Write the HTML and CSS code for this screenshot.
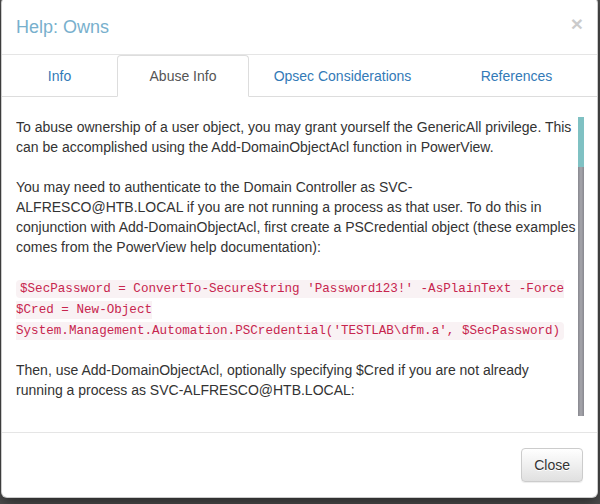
FILE: index.html
```html
<!DOCTYPE html>
<html lang="en">
<head>
<meta charset="utf-8">
<title>Help: Owns</title>
<link rel="stylesheet" href="styles.css">
</head>
<body>
<div class="modal">
  <div class="modal-header">
    <h4 class="modal-title">Help: Owns</h4>
    <button class="close" type="button">&times;</button>
  </div>
  <ul class="tabs">
    <li><a href="#">Info</a></li>
    <li class="active"><a href="#">Abuse Info</a></li>
    <li><a href="#">Opsec Considerations</a></li>
    <li><a href="#">References</a></li>
  </ul>
  <div class="tab-content">
    <div class="scroll">
      <div class="pane">
        <p class="para">To abuse ownership of a user object, you may grant yourself the GenericAll privilege. This can be accomplished using the Add-DomainObjectAcl function in PowerView.</p>
        <p class="para">You may need to authenticate to the Domain Controller as SVC-ALFRESCO@HTB.LOCAL if you are not running a process as that user. To do this in conjunction with Add-DomainObjectAcl, first create a PSCredential object (these examples comes from the PowerView help documentation):</p>
        <p class="para"><code>$SecPassword = ConvertTo-SecureString 'Password123!' -AsPlainText -Force<br>$Cred = New-Object System.Management.Automation.PSCredential('TESTLAB\dfm.a', $SecPassword)</code></p>
        <p class="para">Then, use Add-DomainObjectAcl, optionally specifying $Cred if you are not already running a process as SVC-ALFRESCO@HTB.LOCAL:</p>
      </div>
      <div class="scrollbar"><div class="thumb"></div></div>
    </div>
  </div>
  <div class="modal-footer">
    <button class="btn" type="button">Close</button>
  </div>
</div>
</body>
</html>
```

FILE: styles.css
```css
html, body {
  margin: 0;
  padding: 0;
}

body {
  background: #505050;
  height: 504px;
  overflow: hidden;
  font-family: "Liberation Sans", Arial, sans-serif;
  font-size: 14px;
  line-height: 1.42857143;
  color: #333;
}

.modal {
  margin: -3px 2px 0 1px;
  background: #fff;
  border: 1px solid rgba(0, 0, 0, 0.2);
  border-radius: 6px;
  box-shadow: 0 5px 15px rgba(0, 0, 0, 0.5);
}

.modal-header {
  display: flex;
  justify-content: space-between;
  align-items: flex-start;
  padding: 17px 14px 13px;
  border-bottom: 1px solid #e5e5e5;
}

.modal-title {
  margin: 0;
  font-size: 18px;
  font-weight: normal;
  line-height: 1.42857143;
  color: #78b0cd;
}

.close {
  margin-top: -2px;
  padding: 0;
  border: 0;
  background: none;
  font-family: "Liberation Sans", Arial, sans-serif;
  font-size: 21px;
  font-weight: bold;
  line-height: 1;
  color: #000;
  opacity: 0.2;
  text-shadow: 0 1px 0 #fff;
}

.tabs {
  display: grid;
  grid-template-columns: 115px 132px 187px 1fr;
  list-style: none;
  margin: 0;
  padding: 0;
  border-bottom: 1px solid #ddd;
}

.tabs li {
  margin-bottom: -1px;
}

.tabs a {
  display: block;
  padding: 10px 15px;
  line-height: 20px;
  text-align: center;
  color: #337ab7;
  text-decoration: none;
  border: 1px solid transparent;
  border-radius: 4px 4px 0 0;
}

.tabs .active a {
  color: #555;
  background: #fff;
  border-color: #ddd;
  border-bottom-color: #fff;
}

.tab-content {
  padding: 20px 13px 16px 14px;
}

.scroll {
  display: flex;
  justify-content: space-between;
  height: 299px;
  overflow: hidden;
}

.pane {
  flex: 0 0 561px;
}

.scrollbar {
  flex: 0 0 6px;
  display: flex;
  flex-direction: column;
  background: linear-gradient(to right, #88888f, #a6a6ac 50%, #88888f);
}

.thumb {
  height: 50px;
  background: #7fc1c3;
}

.para {
  margin: 0 0 20px;
}

code {
  font-family: "Liberation Mono", "Courier New", monospace;
  font-size: 90%;
  line-height: 17px;
  color: #c7254e;
  background: #f9f2f4;
  padding: 2px 4px;
  border-radius: 4px;
}

.modal-footer {
  display: flex;
  justify-content: flex-end;
  padding: 15px 14px;
  border-top: 1px solid #e5e5e5;
}

.btn {
  font-family: "Liberation Sans", Arial, sans-serif;
  font-size: 14px;
  line-height: 1.42857143;
  padding: 6px 12px;
  color: #333;
  border: 1px solid #ccc;
  border-radius: 4px;
  background: linear-gradient(to bottom, #fff 0, #e0e0e0 100%);
  text-shadow: 0 1px 0 #fff;
  box-shadow: inset 0 1px 0 rgba(255, 255, 255, 0.15), 0 1px 1px rgba(0, 0, 0, 0.075);
}
```
